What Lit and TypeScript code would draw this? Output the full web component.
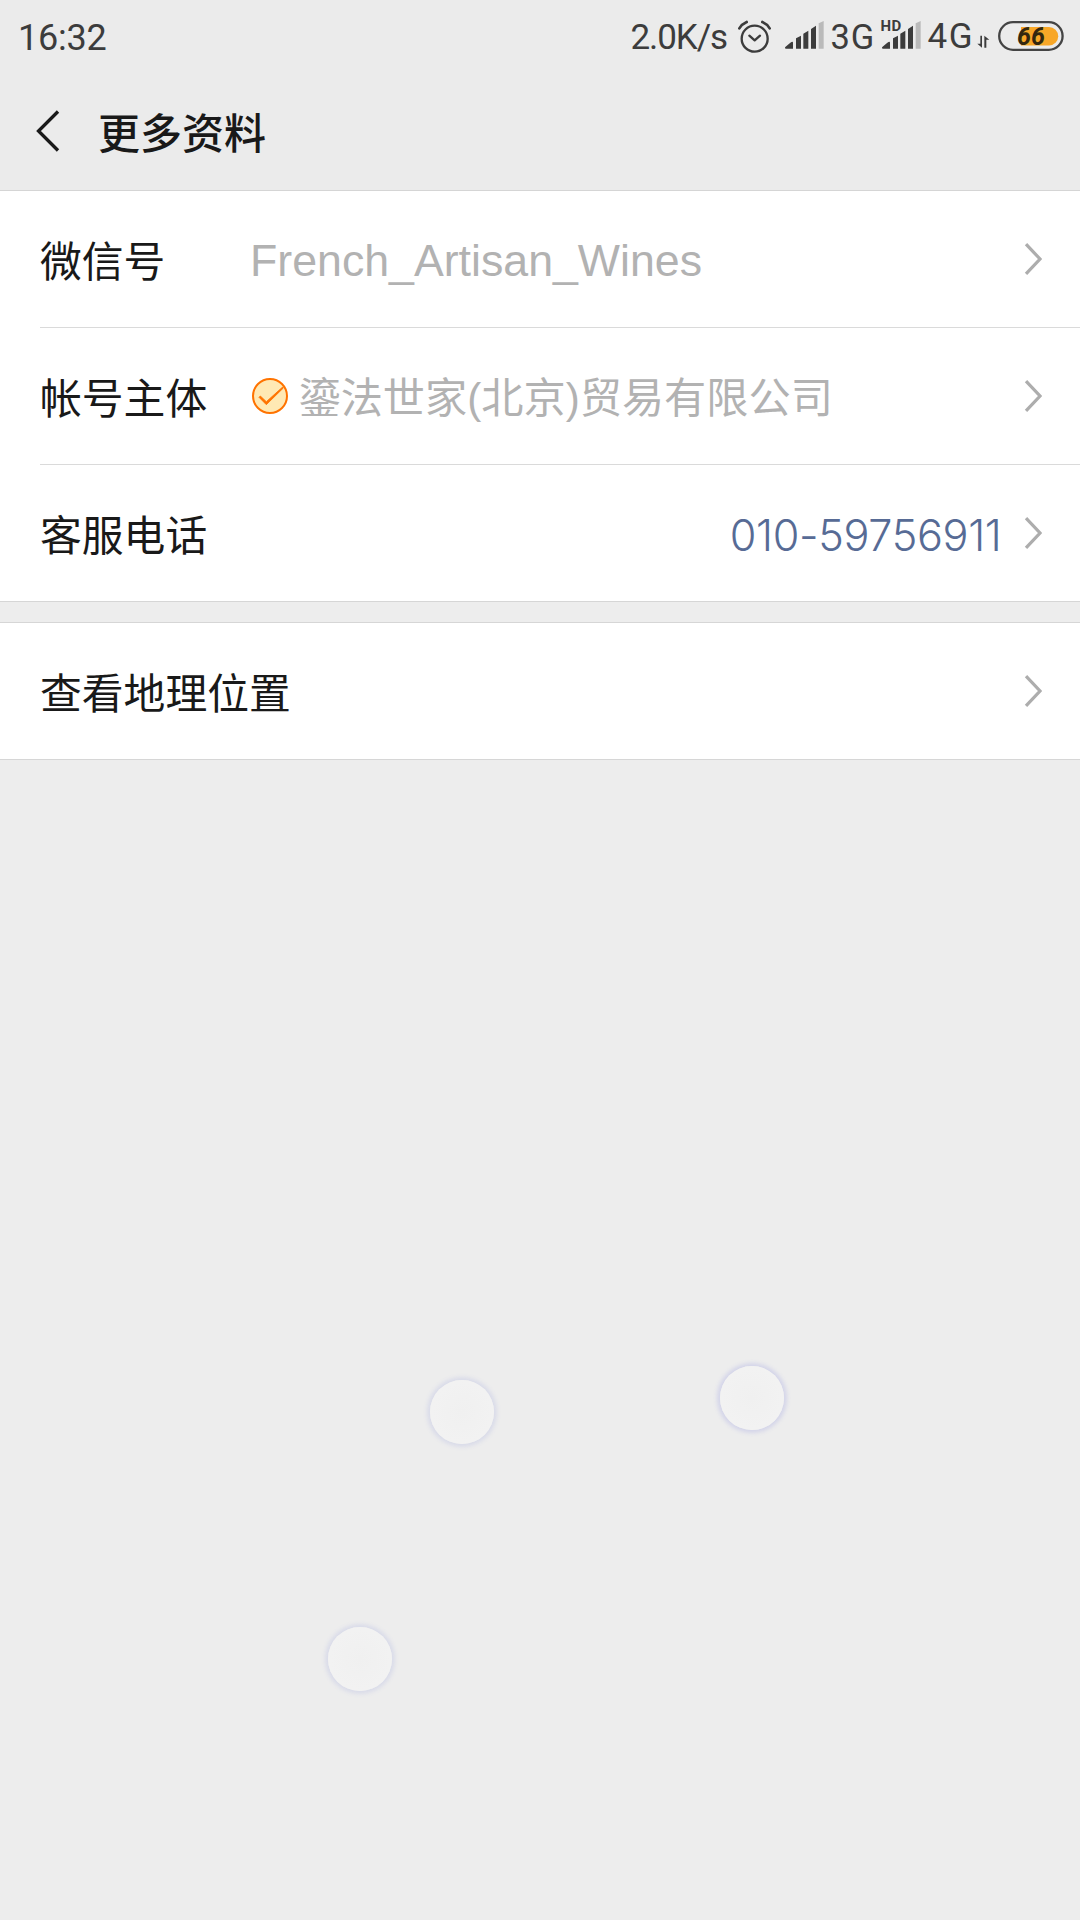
import { LitElement, html, css, svg, nothing } from "lit";
import { customElement, property } from "lit/decorators.js";

const signalBars = svg`
  <path fill="#3c3c3c" d="M2 83 Q0 83 0 79 L16 65 Q24 59 24 65 V83Z
    M33 83 V52 L48 44 V83Z M55 83 V38 L70 29 V83Z M78 83 V24 L93 14 V83Z"/>
  <path fill="#bababa" d="M101 83 V7 L116 0 V83Z"/>`;

@customElement("status-bar")
class StatusBar extends LitElement {
  static styles = css`
    :host {
      display: flex;
      align-items: flex-start;
      height: 72px;
      padding-left: 18px;
      box-sizing: border-box;
      color: #3c3c3c;
      font: 35px/42px Roboto, "Noto Sans", sans-serif;
      white-space: nowrap;
    }
    svg { display: block; flex: none; }
    .time { padding-top: 17px; font-size: 36px; letter-spacing: -0.2px; }
    .speed { margin-left: auto; padding-top: 17px; width: 106px; letter-spacing: -1.1px; }
    .alarm { margin-top: 20px; width: 35px; height: 33px; }
    .signal { margin: 21px 0 0 13px; width: 40px; height: 28px; }
    .net3 { padding-top: 16px; margin-left: 6px; width: 50px; font-size: 34.5px; letter-spacing: 0.8px; }
    .dual { position: relative; width: 47px; }
    .dual .signal { margin-left: 1px; }
    .hd {
      position: absolute;
      left: 0;
      top: 17px;
      font: 700 15px/18px Roboto, sans-serif;
      letter-spacing: 0.5px;
    }
    .net4 { padding-top: 16px; width: 49.5px; letter-spacing: 1.5px; }
    .arrows { margin-top: 35px; width: 13px; height: 14px; }
    .battery { margin: 21px 16px 0 8px; width: 66px; height: 30px; }
    .level { font: italic 700 25px Roboto, sans-serif; }
  `;
  render() {
    return html`
      <span class="time">16:32</span>
      <span class="speed">2.0K/s</span>
      <svg class="alarm" viewBox="0 0 105 99" fill="none" stroke="#3c3c3c" stroke-width="7" stroke-linecap="round">
        <circle cx="53" cy="56" r="39" />
        <path d="M37 47 L53 61 L69 47" stroke-linejoin="round" />
        <path d="M7 25 Q15 12 29 6 M76 6 Q90 12 98 25" stroke-width="8" />
      </svg>
      <svg class="signal" viewBox="0 0 120 84">${signalBars}</svg>
      <span class="net3">3G</span>
      <span class="dual">
        <svg class="signal" viewBox="0 0 120 84">${signalBars}</svg>
        <span class="hd">HD</span>
      </span>
      <span class="net4">4G</span>
      <svg class="arrows" viewBox="0 0 39 42" fill="#3c3c3c">
        <path d="M10 2 H15 V38 L1 26 H10Z M22 38 V2 L37 14 H28 V38Z" />
      </svg>
      <svg class="battery" viewBox="0 0 66 30">
        <rect x="1.2" y="1.2" width="63.4" height="27.6" rx="13.8" fill="none" stroke="#444" stroke-width="2.3" />
        <path d="M23 6 H51 A9.2 9.2 0 0 1 51 24.4 H23Z" fill="#f8a727" />
        <text class="level" x="19" y="24.2" textLength="28" fill="#33270f">66</text>
      </svg>
    `;
  }
}

@customElement("info-row")
class InfoRow extends LitElement {
  @property() label = "";
  @property() value = "";
  @property({ type: Boolean }) verified = false;
  @property({ type: Boolean }) phone = false;
  static styles = css`
    :host {
      display: flex;
      align-items: center;
      height: 136px;
      padding: 0 38.5px 0 40px;
      font: 41.8px/60px Roboto, "Noto Sans CJK SC", sans-serif;
      color: #191919;
      white-space: nowrap;
    }
    .label {
      width: 210px;
      flex: none;
      font-family: "Noto Sans CJK SC", sans-serif;
      padding-bottom: 1px;
    }
    .badge { width: 38px; height: 38px; margin: 0 10px 0 0.5px; }
    .value {
      flex: 1;
      color: #b2b2b2;
      font-family: "Liberation Sans", "Noto Sans CJK SC", sans-serif;
    }
    .latin { font-size: 44.7px; padding-top: 4px; }
    .company { font-size: 42.2px; padding-top: 5px; }
    .phone {
      color: #576b95;
      text-align: right;
      font: 300 43.2px/60px Inter, Roboto, sans-serif;
      letter-spacing: -0.35px;
      padding: 4px 22px 0 0;
    }
    .chevron { width: 18px; height: 32px; flex: none; }
  `;
  render() {
    const kind = this.phone ? "phone" : this.verified ? "company" : "latin";
    return html`
      <span class="label">${this.label}</span>
      ${this.verified
        ? html`<svg class="badge" viewBox="0 0 114 114">
            <circle cx="57" cy="57" r="51" fill="#ffe9b4" stroke="#ff7300" stroke-width="6" />
            <path d="M28 57 L46 74 L95 30 L97 33 L46 83 L24 61Z" fill="#ff7300" stroke="#ff7300" stroke-width="2.5" />
          </svg>`
        : nothing}
      <span class="value ${kind}">${this.value}</span>
      <svg class="chevron" viewBox="0 0 18 32">
        <path d="M2 1.2 L16 16 L2 30.8" fill="none" stroke="#adadad" stroke-width="3.2" />
      </svg>
    `;
  }
}

@customElement("app-root")
class AppRoot extends LitElement {
  static styles = css`
    :host {
      display: block;
      position: relative;
      height: 1920px;
      overflow: hidden;
      background: #ededed;
    }
    .top { height: 190px; background: #ebebeb; border-bottom: 1px solid #d5d5d5; }
    .title-bar { display: flex; align-items: center; height: 118px; padding-left: 36px; }
    .back { width: 24px; height: 42px; }
    .title {
      margin: 0 0 1px 38px;
      font: 500 42px/60px "Noto Sans CJK SC", sans-serif;
      color: #191919;
    }
    .group { background: #fff; border-bottom: 1px solid #d6d6d6; }
    .line { height: 1px; margin-left: 40px; background: #dadada; }
    .gap { height: 20px; border-bottom: 1px solid #d6d6d6; }
    .touch {
      position: absolute;
      width: 64px;
      height: 64px;
      border-radius: 50%;
      background: radial-gradient(#f0f0f0, #f3f3f3);
      box-shadow: 0 0 4px 3px #d9dbe9;
    }
    .touch.a { left: 430px; top: 1380px; }
    .touch.b { left: 720px; top: 1366px; box-shadow: 0 0 4px 3px #d3d4e9; }
    .touch.c { left: 328px; top: 1627px; }
  `;
  render() {
    return html`
      <header class="top">
        <status-bar></status-bar>
        <div class="title-bar">
          <svg class="back" viewBox="0 0 24 42">
            <path d="M22 1.5 L2.5 21 L22 40.5" fill="none" stroke="#191919" stroke-width="3.3" />
          </svg>
          <h1 class="title">更多资料</h1>
        </div>
      </header>
      <section class="group">
        <info-row label="微信号" value="French_Artisan_Wines"></info-row>
        <div class="line"></div>
        <info-row label="帐号主体" value="鎏法世家(北京)贸易有限公司" verified></info-row>
        <div class="line"></div>
        <info-row label="客服电话" value="010-59756911" phone></info-row>
      </section>
      <div class="gap"></div>
      <section class="group">
        <info-row label="查看地理位置"></info-row>
      </section>
      <i class="touch a"></i>
      <i class="touch b"></i>
      <i class="touch c"></i>
    `;
  }
}
